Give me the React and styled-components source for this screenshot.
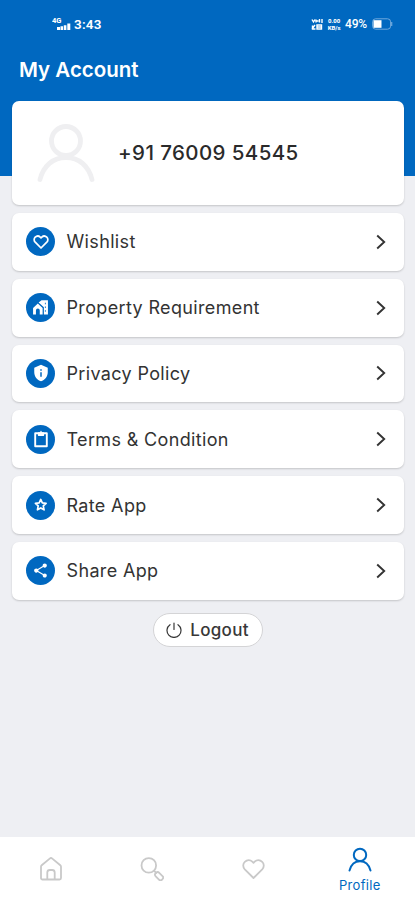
import React from 'react';
import styled, { createGlobalStyle } from 'styled-components';
import { MdPrivacyTip, MdShare } from 'react-icons/md';

const BLUE = '#0068c0';
const GREY = '#c9c9c9';

const GlobalStyle = createGlobalStyle`
  * {
    box-sizing: border-box;
  }
  body {
    margin: 0;
    background: #eeeff3;
    font-family: Inter, Roboto, sans-serif;
  }
`;

const Screen = styled.div`
  display: flex;
  flex-direction: column;
  width: 100%;
  height: 900px;
  overflow: hidden;
  background: linear-gradient(${BLUE} 176px, #eeeff3 176px);
`;

const StatusBar = styled.div`
  display: flex;
  justify-content: space-between;
  align-items: center;
  height: 48px;
  padding: 0 22px 0 52px;
  color: #fff;
`;

const StatusGroup = styled.div`
  display: flex;
  align-items: center;
`;

const Clock = styled.span`
  margin-left: 2px;
  font: 600 13.5px Roboto, sans-serif;
  letter-spacing: 0.2px;
`;

const Percent = styled.span`
  margin: 0 5px 0 4px;
  font: 500 12px Roboto, sans-serif;
  letter-spacing: -0.2px;
`;

const Tiny = styled.span`
  display: flex;
  flex-direction: column;
  margin-left: 4px;
  width: 14px;
  font: 800 6px/7px Roboto, sans-serif;
  text-align: center;
  white-space: nowrap;
`;

const Title = styled.h1`
  margin: 0;
  height: 53px;
  padding: 9px 19px 0;
  color: #fff;
  font-size: 20.5px;
  line-height: 25px;
  font-weight: 600;
  letter-spacing: 0;
`;

const Content = styled.main`
  display: flex;
  flex-direction: column;
  align-items: center;
  gap: 8px;
  flex: 1;
  padding: 0 11px 0 12px;
`;

const Card = styled.div`
  display: flex;
  align-items: center;
  width: 100%;
  border-radius: 7px;
  background: #fff;
  box-shadow: 0 1px 2px rgba(0, 0, 0, 0.18);
`;

const UserCard = styled(Card)`
  height: 104px;
  padding-left: 24px;
`;

const Phone = styled.span`
  margin-left: 22px;
  padding-bottom: 1px;
  color: #2a2a2a;
  font-size: 20.5px;
  font-weight: 500;
  letter-spacing: 0.4px;
`;

const Row = styled(Card)`
  height: 57.8px;
  padding: 0 17px 0 14px;
`;

const RowIcon = styled.span`
  display: flex;
  align-items: center;
  justify-content: center;
  width: 29px;
  height: 29px;
  border-radius: 50%;
  background: ${BLUE};
  color: #fff;
`;

const RowLabel = styled.span`
  flex: 1;
  margin-left: 11.5px;
  color: #333;
  font-size: 18px;
  letter-spacing: 0.35px;
`;

const Logout = styled.button`
  display: flex;
  align-items: center;
  gap: 8px;
  height: 34px;
  margin-top: 5px;
  padding: 1px 13px 0 12px;
  border: 1px solid #d4d4d6;
  border-radius: 17px;
  background: #fff;
  color: #383838;
  font: 500 17px Inter, sans-serif;
  letter-spacing: 0.3px;
`;

const TabBar = styled.nav`
  display: grid;
  grid-template-columns: repeat(3, 101.5px) 1fr;
  height: 63px;
  background: #fff;
`;

const Tab = styled.div`
  display: flex;
  flex-direction: column;
  align-items: center;
  padding-top: ${({ $active }) => ($active ? '9px' : '20px')};
  color: ${({ $active }) => ($active ? BLUE : GREY)};
  font-size: 13px;
  line-height: 16px;
  letter-spacing: 0.3px;
`;

const TabLabel = styled.span`
  margin-top: 3px;
`;

const Line = ({ w, h = w, box, stroke = 2, children }) => (
  <svg
    width={w}
    height={h}
    viewBox={box || `0 0 ${w} ${h}`}
    fill="none"
    stroke="currentColor"
    strokeWidth={stroke}
    strokeLinecap="round"
    strokeLinejoin="round"
  >
    {children}
  </svg>
);

const HeartPath = () => (
  <path d="M12 21 3.3 12.3C1.2 10.1 1.2 6.8 3.3 4.8 5.5 2.7 8.8 2.8 10.8 4.6L12 5.8l1.2-1.2c2-1.8 5.3-1.9 7.5.2 2.1 2 2.1 5.3 0 7.5Z" />
);

const HomeCityIcon = () => (
  <svg width="17" height="17" viewBox="0 0 16 16" fill="currentColor">
    <path d="M1 14.500V8.500L5.500 4.300 10 8.500v6H7.300v-3.700a1.800 1.800 0 0 0-3.600 0v3.700Z" />
    <path d="M6.200 3.300 9 1.200h6v13.300h-3.800V7.800L7 4Z" />
    <path d="M12.600 3.500v1.500M12.600 7v1.500M12.600 10.500V12" stroke={BLUE} strokeWidth="0.800" />
  </svg>
);

const ClipboardIcon = () => (
  <Line w={16} h={18} stroke={1.9}>
    <path d="M2.200 3.300h11.600v12.900H2.200z" />
    <path d="M5.500 3h5v2.300h-5zM8 1.500v1" fill="currentColor" strokeWidth="1.300" />
  </Line>
);

const StarIcon = () => (
  <Line w={13.5} box="0 0 24 24" stroke={3}>
    <path d="m12 2.500 2.800 6.200 6.700.8-5 4.600 1.400 6.900-5.900-3.400L6.100 21l1.400-6.900-5-4.600 6.700-.8Z" />
  </Line>
);

const items = [
  { label: 'Wishlist', icon: <Line w={16} box="0 0 24 24" stroke={2.6}><HeartPath /></Line> },
  { label: 'Property Requirement', icon: <HomeCityIcon /> },
  { label: 'Privacy Policy', icon: <MdPrivacyTip size={18} /> },
  { label: 'Terms & Condition', icon: <ClipboardIcon /> },
  { label: 'Rate App', icon: <StarIcon /> },
  { label: 'Share App', icon: <MdShare size={17} /> },
];

const SignalIcon = () => (
  <svg width="20" height="14" viewBox="0 0 20 14" fill="#fff">
    <text x="0" y="6" fontFamily="Roboto" fontSize="7.500" fontWeight="800">4G</text>
    <path d="M5 10h3v3H5zM8.500 9.300h2.600V13H8.500zM11.800 8.200h2.600V13h-2.600zM15.300 6.500h3V13h-3z" />
  </svg>
);

const BatteryIcon = () => (
  <svg width="21" height="12" viewBox="0 0 21 12" fill="none">
    <rect x="0.600" y="0.800" width="18" height="10.400" rx="3" stroke="#6fa9dd" />
    <path d="M19.700 4v4" stroke="#6fa9dd" strokeWidth="1.200" />
    <path d="M1.500 2.200h8v7.600h-8z" fill="#fff" />
  </svg>
);

const App = () => (
  <Screen>
    <GlobalStyle />
    <StatusBar>
      <StatusGroup>
        <SignalIcon />
        <Clock>3:43</Clock>
      </StatusGroup>
      <StatusGroup>
        <svg width="12" height="12" viewBox="0 0 12 12" fill="none" stroke="#fff" strokeWidth="1.400">
          <path d="M1 1.500 2.500 4 4 1.500M5 1.500v3M5.500 3h2M8.500 1v3.500M11 1v4M1 11l3-4M1.500 7.500v3.500h3M6 7h4.500v4H6zM6 9h4" />
        </svg>
        <Tiny>
          <span>0.00</span>
          <span>KB/s</span>
        </Tiny>
        <Percent>49%</Percent>
        <BatteryIcon />
      </StatusGroup>
    </StatusBar>
    <Title>My Account</Title>
    <Content>
      <UserCard>
        <svg width="60" height="60" viewBox="0 0 60 60" fill="none" stroke="#efeff1" strokeWidth="4.800" strokeLinecap="round">
          <circle cx="30" cy="18" r="14.500" />
          <path d="M4 56.500C7.500 43 17 34.500 30 34.500S52.500 43 56 56.500" />
        </svg>
        <Phone>+91 76009 54545</Phone>
      </UserCard>
      {items.map((item) => (
        <Row key={item.label}>
          <RowIcon>{item.icon}</RowIcon>
          <RowLabel>{item.label}</RowLabel>
          <svg width="12" height="16" viewBox="0 0 12 16" fill="none" stroke="#333" strokeWidth="1.900">
            <path d="m2.200 1.500 7 6.500-7 6.500" />
          </svg>
        </Row>
      ))}
      <Logout>
        <Line w={16} stroke={1.2}>
          <path d="M4 2.700a7 7 0 1 0 8 0M8 1v6.500" />
        </Line>
        Logout
      </Logout>
    </Content>
    <TabBar>
      <Tab>
        <Line w={24} stroke={1.8}>
          <path d="M2 9.800a2 2 0 0 1 .7-1.500L10.700 1.600a2 2 0 0 1 2.600 0l8 6.700a2 2 0 0 1 .7 1.500V21a1.500 1.500 0 0 1-1.500 1.500h-17A1.500 1.500 0 0 1 2 21Z" />
          <path d="M8.300 22v-6.500a2.500 2.500 0 0 1 2.500-2.500h2.400a2.500 2.500 0 0 1 2.500 2.500V22" />
        </Line>
      </Tab>
      <Tab>
        <Line w={24} stroke={1.8}>
          <circle cx="8.800" cy="8.400" r="7.300" />
          <path d="m14.200 13.800 2 2" />
          <rect x="14.600" y="16.700" width="9" height="5" rx="2.200" transform="rotate(45 19.100 19.200)" />
        </Line>
      </Tab>
      <Tab>
        <Line w={25} h={24} box="0 0 24 24" stroke={1.8}><HeartPath /></Line>
      </Tab>
      <Tab $active>
        <Line w={26} h={28} stroke={2}>
          <circle cx="13" cy="8.900" r="6.200" />
          <path d="M2.500 24.500C4 19 8 15.300 13 15.300s9 3.700 10.500 9.200" />
        </Line>
        <TabLabel>Profile</TabLabel>
      </Tab>
    </TabBar>
  </Screen>
);

export default App;
